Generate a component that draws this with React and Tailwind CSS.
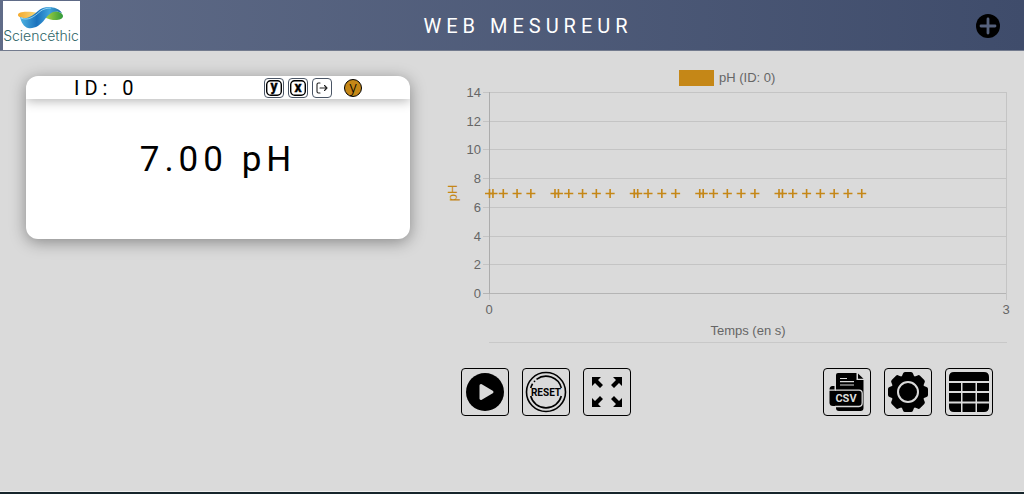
import { useState } from 'react';

// Instants de mesure (en s)
const temps = [
  0, 0.02, 0.08, 0.16, 0.24, 0.38, 0.4, 0.46, 0.54, 0.62, 0.7, 0.84, 0.86, 0.92, 1.0, 1.08,
  1.22, 1.24, 1.3, 1.38, 1.46, 1.54, 1.68, 1.7, 1.76, 1.84, 1.92, 2.0, 2.08, 2.16,
];

const graduations = [0, 2, 4, 6, 8, 10, 12, 14];

const COULEUR = '#c58717';

function Logo() {
  return (
    <svg viewBox="0 0 77 49" className="h-[49px] w-[77px]" role="img" aria-label="Sciencéthic">
      <defs>
        <linearGradient id="bleu" x1="0" y1="0" x2="1" y2="0">
          <stop offset="0" stopColor="#4fb4e2" />
          <stop offset="0.4" stopColor="#1b72bd" />
          <stop offset="0.7" stopColor="#3fa3dc" />
          <stop offset="1" stopColor="#1d6a9c" />
        </linearGradient>
        <linearGradient id="jaune" x1="0" y1="0" x2="1" y2="0">
          <stop offset="0" stopColor="#f3a92c" />
          <stop offset="1" stopColor="#f8e08a" />
        </linearGradient>
        <linearGradient id="vert" x1="0" y1="0" x2="1" y2="0">
          <stop offset="0" stopColor="#b4d643" />
          <stop offset="1" stopColor="#2f9a3c" />
        </linearGradient>
      </defs>
      <rect width="77" height="49" fill="#fff" />
      <path d="M15 14C15 10 25 10 36 12C32 16 28 18 22 17C18 17 15 16 15 14Z" fill="url(#jaune)" />
      <path d="M44 12C50 9 59 10 60 15C60 20 49 20 43 17C40 15 41 14 44 12Z" fill="url(#vert)" />
      <path d="M17 16C24 19 29 15 35 10C41 4 54 5 59 12C51 8 47 12 42 18C37 25 31 28 25 27C21 26 18 21 17 16Z" fill="url(#bleu)" />
      <path d="M18 17C25 20 31 16 37 10.500C40 8 44 7 48 7" fill="none" stroke="#a9e2f7" strokeWidth="0.8" />
      <text x="38" y="40" textAnchor="middle" fontSize="14" fontFamily="Inter, sans-serif" fontWeight="300" fill="#2f6668">
        Sciencéthic
      </text>
    </svg>
  );
}

function Touche({ lettre, base }) {
  return (
    <svg viewBox="0 0 18 18" className="size-[18px]" aria-hidden="true">
      <rect x="1.700" y="1.700" width="14.600" height="14.600" rx="4" fill="none" stroke="#000" strokeWidth="1.4" />
      <text x="9" y={base} textAnchor="middle" fontSize="14" fontWeight="700" fontFamily="Roboto, sans-serif" stroke="#000" strokeWidth="0.4">
        {lettre}
      </text>
    </svg>
  );
}

function PetitBouton({ label, children }) {
  return (
    <button type="button" aria-label={label} className="flex size-5 items-center justify-center rounded-sm border border-gray-600 bg-white">
      {children}
    </button>
  );
}

function Bouton({ label, onClick, children }) {
  return (
    <button type="button" aria-label={label} onClick={onClick} className="flex size-12 items-center justify-center rounded-sm border border-black">
      <svg viewBox="0 0 46 46" className="size-[46px] shrink-0" aria-hidden="true">
        {children}
      </svg>
    </button>
  );
}

function Graphique() {
  const x = (t) => 49.5 + (t * 517) / 3;
  const y = (v) => 227.5 - Math.round((v * 201) / 14);

  return (
    <svg viewBox="0 0 574 284" className="w-full" fontFamily="'Liberation Sans', Arial, sans-serif" fontSize="13" fill="#666">
      <rect x="239.5" y="4.5" width="34" height="15" fill={COULEUR} stroke={COULEUR} />
      <text x="279" y="16">pH (ID: 0)</text>

      {/* Axe des ordonnées */}
      {graduations.map((v) => (
        <g key={v}>
          <line x1="43" x2="566" y1={y(v)} y2={y(v)} stroke={v === 0 ? '#b4b4b4' : '#c4c4c4'} />
          <text x="41" y={y(v) + 4} textAnchor="end">{v}</text>
        </g>
      ))}
      <line x1="49.5" x2="49.5" y1="26" y2="228" stroke="#acacac" />
      <line x1="49.5" x2="49.5" y1="228" y2="234" stroke="#c4c4c4" />
      <line x1="566.5" x2="566.5" y1="26" y2="234" stroke="#c4c4c4" />
      <text transform="translate(17 127) rotate(-90)" textAnchor="middle" fill={COULEUR}>pH</text>

      {/* Axe des abscisses */}
      <text x="49" y="248" textAnchor="middle">0</text>
      <text x="566" y="248" textAnchor="middle">3</text>
      <text x="308" y="269" textAnchor="middle">Temps (en s)</text>
      <line x1="49" x2="567" y1="276.5" y2="276.5" stroke="#c8c8c8" />

      {temps.map((t) => (
        <path key={t} d={`M${x(t) - 4.5} 127.5h9M${x(t)} 123v9`} stroke={COULEUR} strokeWidth="1.6" />
      ))}
    </svg>
  );
}

export default function App() {
  const [enMarche, setEnMarche] = useState(false);

  return (
    <div className="flex min-h-screen flex-col bg-[#dadada] font-[Roboto,sans-serif] text-black">
      <header className="grid h-[51px] grid-cols-[auto_1fr_auto] items-center border-b border-[#737b8e] bg-linear-to-r from-[#606c88] to-[#3f4c6b] pt-px pr-6 pl-[3px]">
        <Logo />
        <h1 className="text-center text-xl tracking-[5px] text-white">WEB MESUREUR</h1>
        <button type="button" aria-label="Ajouter un capteur">
          <svg viewBox="0 0 24 24" className="size-6" aria-hidden="true">
            <circle cx="12" cy="12" r="12" fill="#000" />
            <path d="M12 5v14M5 12h14" stroke="#56617c" strokeWidth="2.8" strokeLinecap="round" />
          </svg>
        </button>
      </header>

      <main className="grid grow grid-cols-[384fr_574fr] items-start gap-[30px] pt-[15px] pr-[10px] pl-[26px]">
        {/* Carte du capteur */}
        <section className="mt-[10px] overflow-hidden rounded-xl bg-white shadow-[0_3px_16px_rgba(0,0,0,0.38)]">
          <div className="flex h-[23px] items-center justify-between px-12 shadow-[0_2px_12px_rgba(0,0,0,0.3)]">
            <h2 className="text-xl leading-5 tracking-[5px]">ID: 0</h2>
            <div className="flex items-center gap-1">
              <PetitBouton label="Axe y">
                <Touche lettre="y" base={12} />
              </PetitBouton>
              <PetitBouton label="Axe x">
                <Touche lettre="x" base={13} />
              </PetitBouton>
              <PetitBouton label="Déconnecter">
                <svg viewBox="0 0 18 18" className="size-[18px]" fill="none" stroke="#222" strokeWidth="1.1" strokeLinecap="round" strokeLinejoin="round" aria-hidden="true">
                  <path d="M7 4H5.500Q4 4 4 5.500V12.500Q4 14 5.500 14H7M7 9H14M11.500 6.500L14 9L11.500 11.500" />
                </svg>
              </PetitBouton>
              <span className="ml-2 flex size-[18px] items-center justify-center rounded-full border border-black bg-[#c58717] text-base leading-4 font-light">
                y
              </span>
            </div>
          </div>
          <p className="h-[140px] pt-[39px] text-center text-[35px] leading-11 tracking-[5px]">7.00 pH</p>
        </section>

        <section>
          <Graphique />
          <div className="mt-[18px] flex justify-between px-[21px]">
            <div className="flex gap-[13px]">
              <Bouton label={enMarche ? 'Pause' : 'Démarrer'} onClick={() => setEnMarche(!enMarche)}>
                <circle cx="23" cy="23" r="19" />
                <path d="M19 16.500L30 23L19 29.500Z" fill="#dadada" stroke="#dadada" strokeWidth="3" strokeLinejoin="round" />
              </Bouton>
              <Bouton label="Réinitialiser">
                <circle cx="23" cy="23" r="19.500" fill="none" stroke="#000" strokeWidth="1.6" />
                <path d="M13.500 10.400A15.800 15.800 0 0 1 38.300 19M38.300 27A15.800 15.800 0 0 1 7.700 27M7.700 19A15.800 15.800 0 0 1 9.600 14.800" fill="none" stroke="#000" strokeWidth="1.6" />
                <circle cx="11.500" cy="12.300" r="0.900" />
                <text x="23" y="26.500" textAnchor="middle" fontSize="10" fontWeight="700" fontFamily="Roboto, sans-serif">
                  RESET
                </text>
              </Bouton>
              <Bouton label="Plein écran">
                <path d="M8 8H17L14 11L19 16L16 19L11 14L8 17Z" />
                <path d="M38 8H29L32 11L27 16L30 19L35 14L38 17Z" />
                <path d="M8 38H17L14 35L19 30L16 27L11 32L8 29Z" />
                <path d="M38 38H29L32 35L27 30L30 27L35 32L38 29Z" />
              </Bouton>
            </div>
            <div className="flex gap-[13px]">
              <Bouton label="Exporter en CSV">
                <path d="M14 4H32.500V11H39.500V39Q39.500 42 36.500 42H15Q12 42 12 39V6Q12 4 14 4Z" />
                <path d="M34 4.500L39.500 9.800H34Z" />
                <path d="M16 9.500H23M16 12.700H30M16 16H30" stroke="#dadada" strokeWidth="1.2" />
                <path d="M5.500 20.500Q5.500 17 8.500 17H10.500V20.500Z" />
                <path d="M5.500 21.700H35.500Q38.500 21.700 38.500 24.700V34Q38.500 37 35.500 37H9Q5.500 37 5.500 33.500Z" />
                <path d="M11 21.200H35Q38.200 21.200 38.200 24.400V33.800Q38.200 37.500 35 37.500H11" fill="none" stroke="#dadada" strokeWidth="1.3" />
                <text x="22" y="33" textAnchor="middle" fontSize="11" fontWeight="700" fontFamily="Roboto, sans-serif" fill="#dadada">
                  CSV
                </text>
              </Bouton>
              <Bouton label="Paramètres">
                <circle cx="23" cy="23" r="17" />
                {[0, 45, 90, 135].map((angle) => (
                  <path key={angle} d="M17 7L18 4.500Q18.500 3 20 3H26Q27.500 3 28 4.500L29 7V39L28 41.500Q27.500 43 26 43H20Q18.500 43 18 41.500L17 39Z" transform={`rotate(${angle} 23 23)`} />
                ))}
                <circle cx="23" cy="23" r="10" fill="none" stroke="#dadada" strokeWidth="2" />
              </Bouton>
              <Bouton label="Tableau de mesures">
                <path d="M3 12V8Q3 3 8 3H38Q43 3 43 8V12Z" />
                <path d="M3 14H15V22H3ZM16.500 14H29.500V22H16.500ZM31 14H43V22H31Z" />
                <path d="M3 24H15V32.500H3ZM16.500 24H29.500V32.500H16.500ZM31 24H43V32.500H31Z" />
                <path d="M3 34.500H15V43H8Q3 43 3 38ZM16.500 34.500H29.500V43H16.500ZM31 34.500H43V38Q43 43 38 43H31Z" />
              </Bouton>
            </div>
          </div>
        </section>
      </main>

      <footer className="h-[3px] border-t border-[#efefef] bg-[#16252b]" />
    </div>
  );
}
